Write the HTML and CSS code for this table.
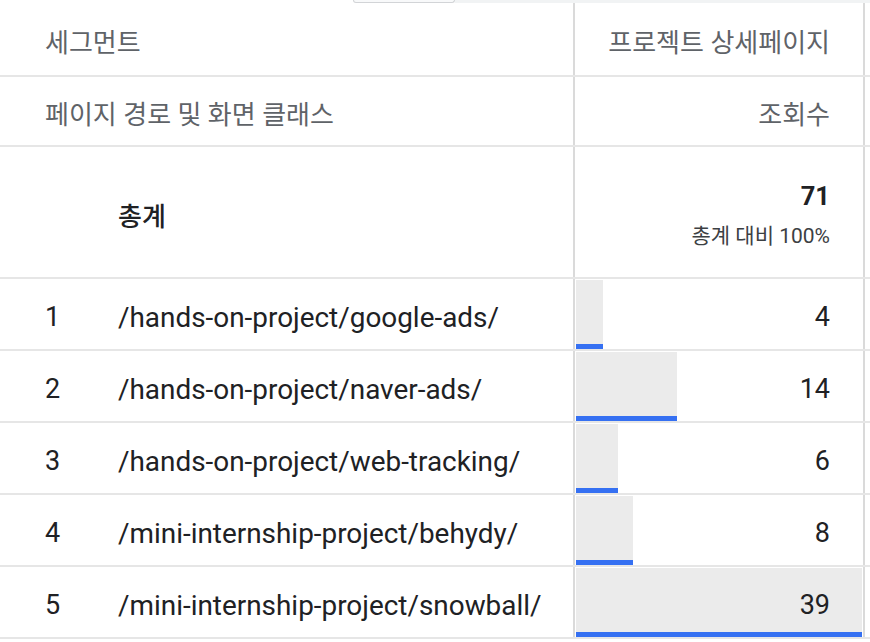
FILE: index.html
```html
<!DOCTYPE html>
<html lang="ko">
<head>
<meta charset="utf-8">
<link rel="stylesheet" href="styles.css">
</head>
<body>
<div class="strip">
  <div class="strip-blank"></div>
  <div class="strip-tab"></div>
  <div class="strip-rest"></div>
</div>
<div class="table">
  <div class="row head h1">
    <div class="cell left"><span class="pad">세그먼트</span></div>
    <div class="cell right"><span>프로젝트 상세페이지</span></div>
    <div class="cell tail"></div>
  </div>
  <div class="row head h2">
    <div class="cell left"><span class="pad">페이지 경로 및 화면 클래스</span></div>
    <div class="cell right"><span>조회수</span></div>
    <div class="cell tail"></div>
  </div>
  <div class="row total">
    <div class="cell left"><span class="idx"></span><span class="label">총계</span></div>
    <div class="cell right">
      <div class="tot">
        <div class="tot-num">71</div>
        <div class="tot-sub">총계 대비 100%</div>
      </div>
    </div>
    <div class="cell tail"></div>
  </div>
  <div class="row data">
    <div class="cell left"><span class="idx">1</span><span class="path">/hands-on-project/google-ads/</span></div>
    <div class="cell right"><div class="bar" style="width:27px"></div><span class="val">4</span></div>
    <div class="cell tail"></div>
  </div>
  <div class="row data">
    <div class="cell left"><span class="idx">2</span><span class="path">/hands-on-project/naver-ads/</span></div>
    <div class="cell right"><div class="bar" style="width:101px"></div><span class="val">14</span></div>
    <div class="cell tail"></div>
  </div>
  <div class="row data">
    <div class="cell left"><span class="idx">3</span><span class="path">/hands-on-project/web-tracking/</span></div>
    <div class="cell right"><div class="bar" style="width:42px"></div><span class="val">6</span></div>
    <div class="cell tail"></div>
  </div>
  <div class="row data">
    <div class="cell left"><span class="idx">4</span><span class="path">/mini-internship-project/behydy/</span></div>
    <div class="cell right"><div class="bar" style="width:57px"></div><span class="val">8</span></div>
    <div class="cell tail"></div>
  </div>
  <div class="row data">
    <div class="cell left"><span class="idx">5</span><span class="path">/mini-internship-project/snowball/</span></div>
    <div class="cell right"><div class="bar" style="width:286px"></div><span class="val">39</span></div>
    <div class="cell tail"></div>
  </div>
</div>
</body>
</html>
```
FILE: styles.css
```css
html, body {
  margin: 0;
  padding: 0;
  background: #ffffff;
}
body {
  width: 870px;
  height: 642px;
  overflow: hidden;
  font-family: Roboto, "Noto Sans CJK KR", "Noto Sans", sans-serif;
  color: #202124;
}
.strip {
  display: flex;
  height: 3px;
}
.strip-blank {
  width: 353px;
  background: #ffffff;
}
.strip-tab {
  width: 102px;
  box-sizing: border-box;
  background: #f8f9fa;
  border: 1px solid #d2d4d7;
  border-top: none;
  border-radius: 0 0 4px 4px;
}
.strip-rest {
  flex: 1;
  background: #f1f3f4;
}
.table {
  display: flex;
  flex-direction: column;
}
.row {
  display: grid;
  grid-template-columns: 573px 292px 5px;
  border-bottom: 2px solid #e6e6e6;
  box-sizing: border-box;
}
.cell {
  box-sizing: border-box;
}
.cell.right {
  border-left: 2px solid #dadada;
  border-right: 2px solid #dadada;
  position: relative;
  display: flex;
  align-items: center;
  justify-content: flex-end;
  padding-right: 33px;
}
.cell.left {
  display: flex;
  align-items: center;
}
.head {
  color: #5f6368;
  font-size: 26px;
}
.head .pad {
  padding-left: 45px;
}
.h1 {
  height: 74px;
}
.h1 .cell, .h1 .cell.right {
  padding-top: 2px;
}
.h2 {
  height: 70px;
}
.h2 .cell, .h2 .cell.right {
  padding-top: 2px;
}
.total {
  height: 132px;
}
.total .label {
  font-size: 26px;
  font-weight: 500;
  padding-top: 4px;
}
.idx {
  width: 118px;
  box-sizing: border-box;
  padding-left: 45px;
  font-size: 27px;
}
.tot {
  display: flex;
  flex-direction: column;
  align-items: flex-end;
  padding-top: 6px;
}
.tot-num {
  font-size: 25.5px;
  font-weight: 700;
  line-height: 32px;
}
.tot-sub {
  font-size: 21px;
  line-height: 28px;
  margin-top: 10px;
  color: #3c4043;
}
.data {
  height: 72px;
  font-size: 27px;
}
.data .cell.left, .data .cell.right {
  padding-top: 6px;
}
.path {
  font-size: 27.9px;
}
.bar {
  position: absolute;
  left: 1px;
  top: 1px;
  bottom: 0;
  background: #ebebeb;
  border-bottom: 5px solid #3570f2;
  box-sizing: border-box;
}
.val {
  position: relative;
}
```
